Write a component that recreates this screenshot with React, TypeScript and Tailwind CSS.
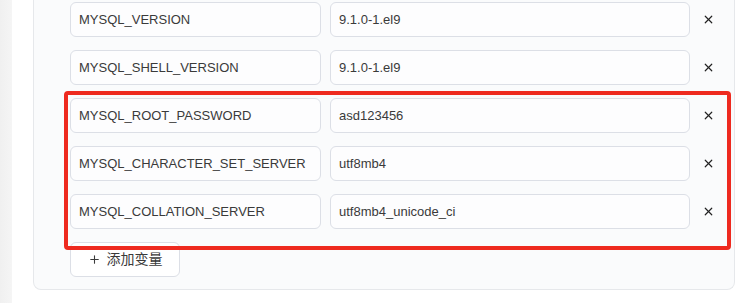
import { X, Plus } from "lucide-react";

type EnvVar = { key: string; value: string };

const vars: EnvVar[] = [
  { key: "MYSQL_VERSION", value: "9.1.0-1.el9" },
  { key: "MYSQL_SHELL_VERSION", value: "9.1.0-1.el9" },
  { key: "MYSQL_ROOT_PASSWORD", value: "asd123456" },
  { key: "MYSQL_CHARACTER_SET_SERVER", value: "utf8mb4" },
  { key: "MYSQL_COLLATION_SERVER", value: "utf8mb4_unicode_ci" },
];

function Field({ value, className }: { value: string; className: string }) {
  return (
    <div
      className={`flex h-[35px] items-center rounded-[6px] border border-[#dcdfe6] bg-[#fdfdfe] px-[8px] text-[13px] text-[#3a3a3a] ${className}`}
    >
      {value}
    </div>
  );
}

export default function App() {
  return (
    <div
      className="relative flex h-[303px] w-[746px] overflow-hidden bg-white"
      style={{ fontFamily: '"Liberation Sans", Arial, "Noto Sans CJK SC", sans-serif' }}
    >
      {/* left gutter */}
      <div className="h-full w-[12px] bg-gradient-to-r from-[#f0f0f0] to-[#f5f5f5]" />

      <div className="ml-[21px] w-[702px] self-start">
        <div className="flex flex-col gap-[13px] rounded-b-[8px] border border-t-0 border-[#e6e8eb] bg-[#fafbfc] pb-[12px] pl-[36px] pt-[2px]">
          {vars.map((v) => (
            <div key={v.key} className="flex items-center">
              <Field value={v.key} className="w-[251px]" />
              <Field value={v.value} className="ml-[9px] w-[360px]" />
              <button type="button" className="flex w-[36px] items-center justify-center text-[#222]">
                <X size={13} strokeWidth={2.2} />
              </button>
            </div>
          ))}
          <div>
            <button
              type="button"
              className="flex h-[35px] w-[110px] items-center justify-center gap-[6px] rounded-[6px] border border-[#dcdfe6] bg-white text-[14px] text-[#3a3a3a]"
            >
              <Plus size={13} strokeWidth={2} />
              <span>添加变量</span>
            </button>
          </div>
        </div>
      </div>

      {/* annotation box */}
      <div className="pointer-events-none absolute left-[64px] top-[91px] h-[159px] w-[667px] rounded-[4px] border-[4px] border-[#ee2a1f]" />
    </div>
  );
}
